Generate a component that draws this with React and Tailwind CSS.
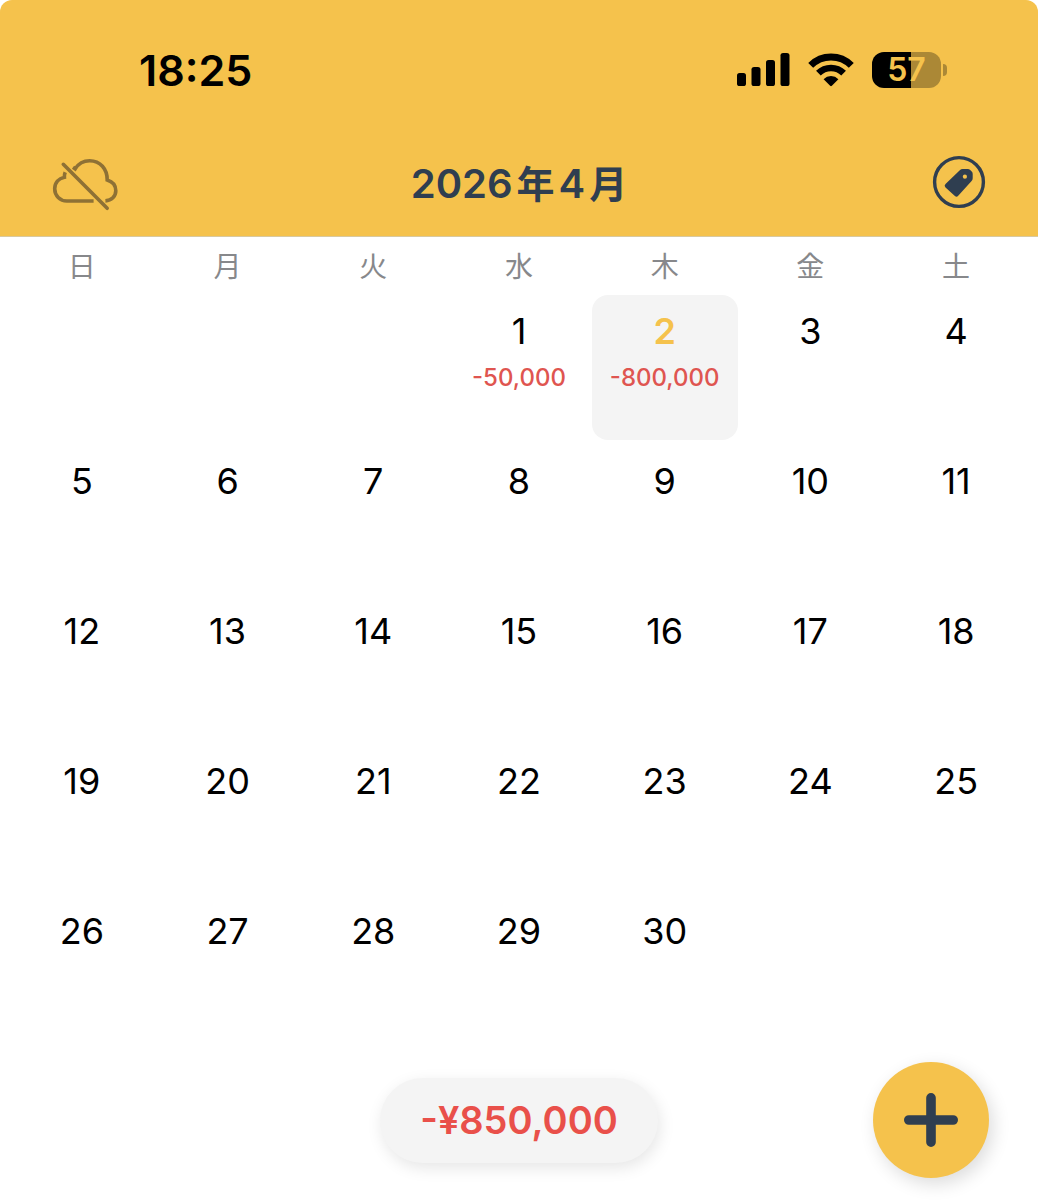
import React, { useState } from "react";

const WEEKDAYS = ["日", "月", "火", "水", "木", "金", "土"];
const FIRST_WEEKDAY = 3;
const DAYS_IN_MONTH = 30;
const AMOUNTS = { 1: "-50,000", 2: "-800,000" };

const WEEKS = Array.from({ length: 5 }, (_, week) =>
  Array.from({ length: 7 }, (_, weekday) => {
    const day = week * 7 + weekday - FIRST_WEEKDAY + 1;
    return day >= 1 && day <= DAYS_IN_MONTH ? day : null;
  })
);

function SignalIcon() {
  return (
    <svg width="53" height="36" viewBox="0 0 53 36" aria-hidden="true">
      <rect x="0" y="21" width="9" height="13" rx="2.6" />
      <rect x="14.5" y="15" width="9" height="19" rx="2.6" />
      <rect x="29" y="8" width="9" height="26" rx="2.6" />
      <rect x="43.5" y="1" width="9" height="33" rx="2.6" />
    </svg>
  );
}

function WifiIcon() {
  return (
    <svg width="50" height="40" viewBox="0 0 50 40" aria-hidden="true">
      <g fill="none" stroke="#000">
        <path d="M4.7 15.4A28.7 28.7 0 0 1 45.3 15.4" strokeWidth="7" />
        <path d="M12.4 23.2A17.8 17.8 0 0 1 37.6 23.2" strokeWidth="6.6" />
      </g>
      <path d="M17.6 29.2A10.4 10.4 0 0 1 32.4 29.2L25.9 35.8Q25 36.6 24.1 35.8Z" />
    </svg>
  );
}

function Battery({ level }) {
  return (
    <div className="flex items-center gap-0.5">
      <div className="flex h-9 w-[69px] items-center justify-center rounded-xl bg-[linear-gradient(90deg,#000_57%,#ab8836_57%)] text-[32px] leading-9 font-semibold text-[#f5c24c]">
        {level}
      </div>
      <div className="h-3 w-1 rounded-r-full bg-[#ab8836]" />
    </div>
  );
}

function CloudOffIcon() {
  return (
    <svg
      width="72"
      height="60"
      viewBox="1 -3 72 60"
      fill="none"
      stroke="#8e7135"
      strokeWidth="3.6"
      aria-hidden="true"
    >
      <path d="M13.3 9.3L57.2 53.3" strokeLinecap="round" />
      <path d="M15.2 17.2Q14.2 19.6 14.4 22.2C8.6 23.4 4.7 28 4.7 33.8C4.7 40.6 10 46 16.8 46H43.6" />
      <path d="M23 12.2L25.2 13.8C28.3 8.8 33.5 5.7 39.6 5.7C50.2 5.7 57.4 14 57.2 25C62.6 26.6 65.8 30.6 65.8 35.8C65.8 41.2 61.6 45.6 55.4 45.9" />
    </svg>
  );
}

function TagIcon() {
  return (
    <svg width="56" height="56" viewBox="0 0 56 56" aria-hidden="true">
      <circle cx="28" cy="28" r="24.4" fill="none" stroke="#2f3e50" strokeWidth="3.4" />
      <path
        d="M31.6 15.1H36.8Q38.2 15.1 39.2 16.1L40.7 17.6Q41.7 18.6 41.7 20V24.2Q41.7 25.8 40.6 27L27.2 41.8Q25.6 43.6 23.9 41.9L14.5 33.4Q12.7 31.7 14.5 30L28.8 16.3Q30 15.1 31.6 15.1Z"
        fill="#2f3e50"
      />
      <circle cx="33.9" cy="22.7" r="2.1" fill="#f5c24c" />
    </svg>
  );
}

function PlusIcon() {
  return (
    <svg width="56" height="56" viewBox="0 0 56 56" aria-hidden="true">
      <path
        d="M28 5.8V50.2M5.8 28H50.2"
        stroke="#2f3e50"
        strokeWidth="9.6"
        strokeLinecap="round"
      />
    </svg>
  );
}

function DayCell({ day, selected, onSelect }) {
  return (
    <button
      type="button"
      aria-pressed={selected}
      onClick={() => onSelect(day)}
      className={`flex h-[145px] w-full flex-col items-center rounded-2xl pt-[15px] ${
        selected ? "bg-[#f4f4f4]" : ""
      }`}
    >
      <span
        className={`text-4xl leading-[42px] ${
          selected ? "font-semibold text-[#f5c24c]" : "text-black"
        }`}
      >
        {day}
      </span>
      {AMOUNTS[day] && (
        <span className="mt-2.5 text-2xl leading-8 font-medium text-[#df5550]">
          {AMOUNTS[day]}
        </span>
      )}
    </button>
  );
}

export default function App() {
  const [selected, setSelected] = useState(2);

  return (
    <div className="min-h-screen bg-white font-['Inter','Noto_Sans_CJK_JP',sans-serif]">
      <header className="rounded-t-xl border-b border-[#d8c9a0] bg-[#f5c24c] pb-3">
        <div className="flex h-[140px] items-center justify-between pr-[91px] pl-[139px]">
          <time className="text-[43px] font-semibold text-black">18:25</time>
          <div className="flex items-center gap-4">
            <SignalIcon />
            <WifiIcon />
            <Battery level={57} />
          </div>
        </div>
        <div className="grid h-[84px] grid-cols-[1fr_auto_1fr] items-center px-[51px]">
          <button type="button" aria-label="同期オフ" className="justify-self-start">
            <CloudOffIcon />
          </button>
          <h1 className="flex items-baseline gap-1 pt-1 text-[40px] leading-[60px] font-semibold text-[#2f3e50]">
            <span>2026</span>
            <span className="text-[38px]">年</span>
            <span>4</span>
            <span className="text-[38px]">月</span>
          </h1>
          <button type="button" aria-label="カテゴリ" className="justify-self-end">
            <TagIcon />
          </button>
        </div>
      </header>

      <main>
        <div className="px-[9px]">
          <table className="w-full table-fixed border-collapse">
            <thead>
              <tr>
                {WEEKDAYS.map((name) => (
                  <th
                    key={name}
                    scope="col"
                    className="h-[58px] p-0 pt-0.5 text-center text-[28px] leading-10 font-normal text-[#87888b]"
                  >
                    {name}
                  </th>
                ))}
              </tr>
            </thead>
            <tbody>
              {WEEKS.map((week, i) => (
                <tr key={i}>
                  {week.map((day, j) => (
                    <td key={j} className="h-[150px] p-0 align-top">
                      {day && (
                        <DayCell day={day} selected={day === selected} onSelect={setSelected} />
                      )}
                    </td>
                  ))}
                </tr>
              ))}
            </tbody>
          </table>
        </div>

        <div className="grid h-[150px] grid-cols-[1fr_auto_1fr] items-center px-[49px]">
          <p className="col-start-2 rounded-full bg-[#f4f4f4] px-10 py-4 text-[38px] leading-[53px] font-semibold text-[#e9504a] shadow-[2px_5px_16px_rgba(0,0,0,0.1)]">
            -¥850,000
          </p>
          <button
            type="button"
            aria-label="追加"
            className="flex size-[116px] items-center justify-center justify-self-end rounded-full bg-[#f5c24c] shadow-[4px_6px_18px_rgba(0,0,0,0.14)]"
          >
            <PlusIcon />
          </button>
        </div>
      </main>
    </div>
  );
}
